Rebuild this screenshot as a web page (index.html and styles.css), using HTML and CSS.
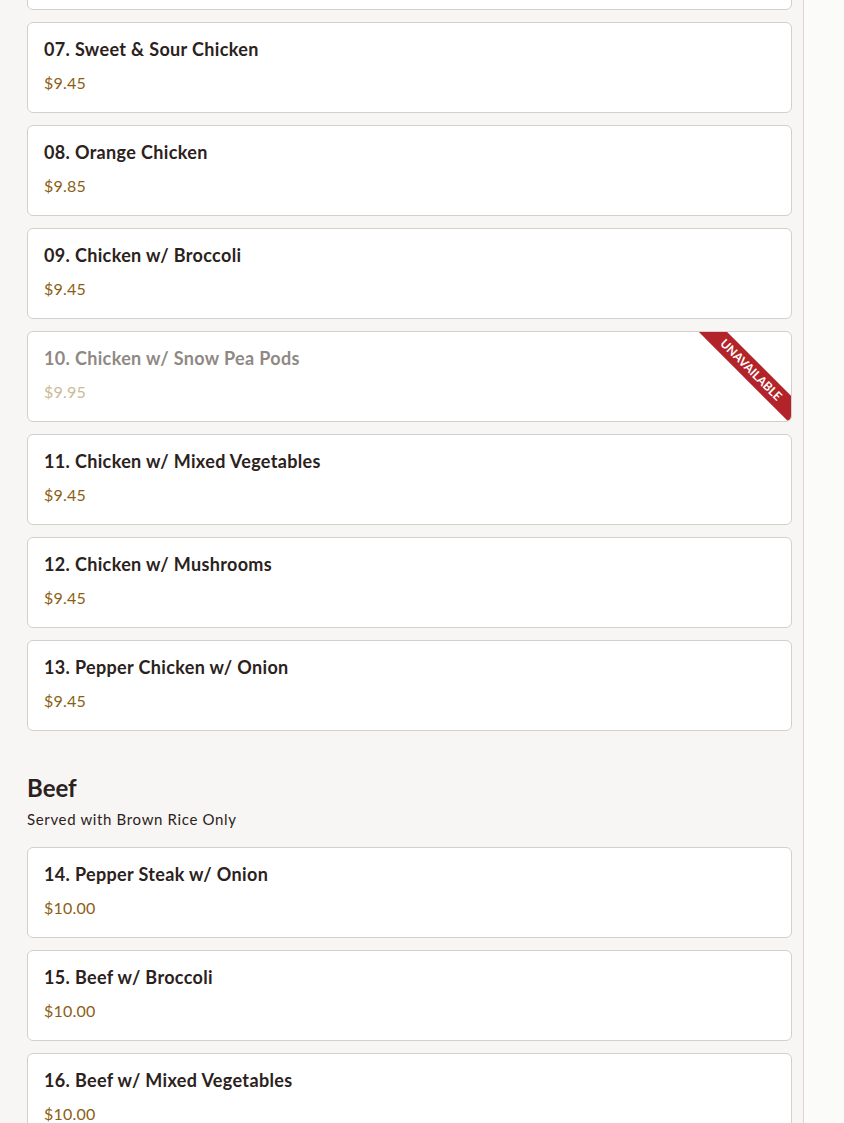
FILE: index.html
```html
<!DOCTYPE html>
<html lang="en">
<head>
<meta charset="utf-8">
<title>Menu</title>
<link rel="stylesheet" href="styles.css">
</head>
<body>
<div class="page">
  <main class="menu">
    <section class="section section-first">
      <div class="cards">
        <div class="card"><div class="name">06. General Tso's Chicken</div><div class="price">$9.85</div></div>
        <div class="card"><div class="name">07. Sweet &amp; Sour Chicken</div><div class="price">$9.45</div></div>
        <div class="card"><div class="name">08. Orange Chicken</div><div class="price">$9.85</div></div>
        <div class="card"><div class="name">09. Chicken w/ Broccoli</div><div class="price">$9.45</div></div>
        <div class="card card-off"><div class="name">10. Chicken w/ Snow Pea Pods</div><div class="price">$9.95</div><div class="ribbon">Unavailable</div></div>
        <div class="card"><div class="name">11. Chicken w/ Mixed Vegetables</div><div class="price">$9.45</div></div>
        <div class="card"><div class="name">12. Chicken w/ Mushrooms</div><div class="price">$9.45</div></div>
        <div class="card"><div class="name">13. Pepper Chicken w/ Onion</div><div class="price">$9.45</div></div>
      </div>
    </section>
    <section class="section">
      <h2 class="section-title">Beef</h2>
      <p class="section-note">Served with Brown Rice Only</p>
      <div class="cards">
        <div class="card"><div class="name">14. Pepper Steak w/ Onion</div><div class="price">$10.00</div></div>
        <div class="card"><div class="name">15. Beef w/ Broccoli</div><div class="price">$10.00</div></div>
        <div class="card"><div class="name">16. Beef w/ Mixed Vegetables</div><div class="price">$10.00</div></div>
      </div>
    </section>
  </main>
</div>
</body>
</html>
```
FILE: styles.css
```css
* { box-sizing: border-box; }
html, body { margin: 0; padding: 0; }
body {
  background: #fbfbfa;
  font-family: Lato, "Noto Sans", "Liberation Sans", sans-serif;
  color: #2b2220;
  height: 1123px;
  overflow: hidden;
}
.page { display: flex; }
.menu {
  width: 804px;
  background: #f8f6f4;
  border-right: 1px solid #d9d6d3;
  padding: 0 11px 0 27px;
  min-height: 1123px;
}
.section-first { margin-top: -81px; }
.section { padding-bottom: 42px; }
.cards { display: flex; flex-direction: column; gap: 12px; }
.card {
  position: relative;
  overflow: hidden;
  background: #fff;
  border: 1px solid #d3cfcb;
  border-radius: 6px;
  height: 91px;
  padding: 13px 16px 0 16px;
}
.name {
  font-size: 18px;
  font-weight: 700;
  letter-spacing: 0.35px;
  line-height: 26px;
  color: #2b2220;
}
.price {
  margin-top: 9px;
  font-size: 16px;
  line-height: 24px;
  letter-spacing: 0.2px;
  color: #8b5e14;
}
.card-off .name { color: #8f8985; }
.card-off .price { color: #cdb995; }
.ribbon {
  position: absolute;
  top: 28px;
  right: -31px;
  width: 142px;
  height: 20px;
  background: #b3242a;
  color: #fff;
  font-size: 12px;
  font-weight: 700;
  text-transform: uppercase;
  line-height: 20px;
  text-align: center;
  transform: rotate(45deg);
}
.section-title {
  margin: 0;
  font-size: 24px;
  font-weight: 700;
  line-height: 30px;
  color: #2b2220;
}
.section-note {
  margin: 6px 0 18px;
  font-size: 15px;
  letter-spacing: 0.65px;
  line-height: 20px;
  color: #2b2220;
}
```
